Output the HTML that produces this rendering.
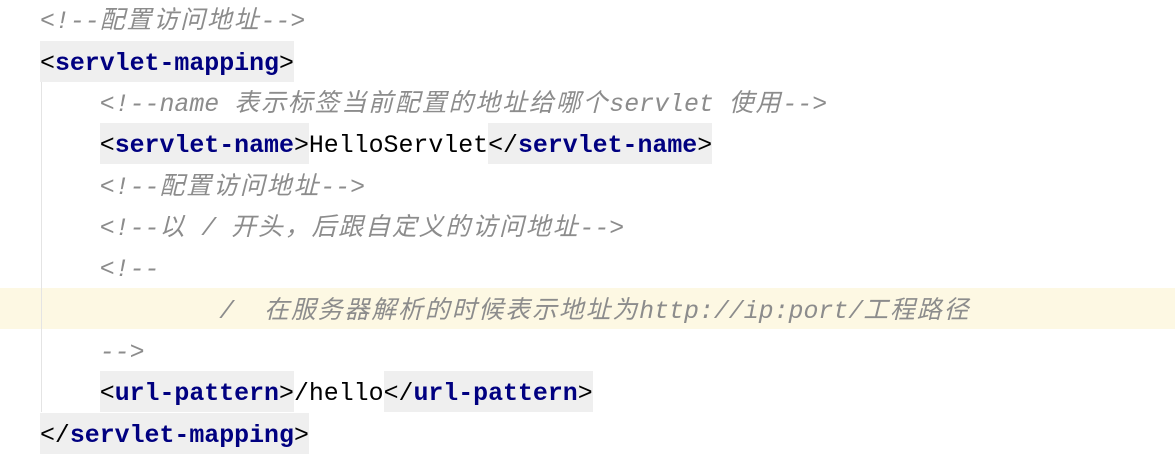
<!DOCTYPE html>
<html><head><meta charset="utf-8"><style>
body{margin:0;background:#fff;width:1175px;height:473px;overflow:hidden;position:relative;font-family:"Liberation Mono","Noto Sans CJK SC",monospace;font-size:24.9px;}
.ln{position:absolute;left:0;width:1175px;height:41.3px;line-height:46px;white-space:pre;overflow:hidden}
.c{color:#8c8c8c;font-style:italic}
.k{color:#000080;font-weight:bold}
.bg{background:#efefef;display:inline-block;height:41.3px;vertical-align:top}
.z{font-family:"Noto Sans CJK SC",sans-serif;letter-spacing:1.9px;font-style:italic;line-height:1;display:inline-block;vertical-align:baseline}
.hl{background:#fdf8e3}
.guide{position:absolute;left:41px;top:82px;width:1px;height:330px;background:#e4e4e4}
.x{padding-left:40px}
</style></head><body>
<div class="ln hl" style="top:288px;height:41px"></div>
<div class="guide"></div>
<div class="ln x" style="top:-1px"><span class="c">&lt;!--<span class="z">配置访问地址</span>--&gt;</span></div>
<div class="ln x" style="top:40.5px"><span class="bg">&lt;<span class="k">servlet-mapping</span>&gt;</span></div>
<div class="ln x" style="top:82px"><span class="c">    &lt;!--name <span class="z">表示标签当前配置的地址给哪个</span>servlet <span class="z">使用</span>--&gt;</span></div>
<div class="ln x" style="top:123px">    <span class="bg">&lt;<span class="k">servlet-name</span>&gt;</span>HelloServlet<span class="bg">&lt;/<span class="k">servlet-name</span>&gt;</span></div>
<div class="ln x" style="top:164.5px"><span class="c">    &lt;!--<span class="z">配置访问地址</span>--&gt;</span></div>
<div class="ln x" style="top:206px"><span class="c">    &lt;!--<span class="z">以</span> / <span class="z">开头，后跟自定义的访问地址</span>--&gt;</span></div>
<div class="ln x" style="top:247px"><span class="c">    &lt;!--</span></div>
<div class="ln x" style="top:288.5px"><span class="c">            /  <span class="z">在服务器解析的时候表示地址为</span>http://ip:port/<span class="z">工程路径</span></span></div>
<div class="ln x" style="top:330px"><span class="c">    --&gt;</span></div>
<div class="ln x" style="top:371px">    <span class="bg">&lt;<span class="k">url-pattern</span>&gt;</span>/hello<span class="bg">&lt;/<span class="k">url-pattern</span>&gt;</span></div>
<div class="ln x" style="top:412.5px"><span class="bg">&lt;/<span class="k">servlet-mapping</span>&gt;</span></div>
</body></html>
